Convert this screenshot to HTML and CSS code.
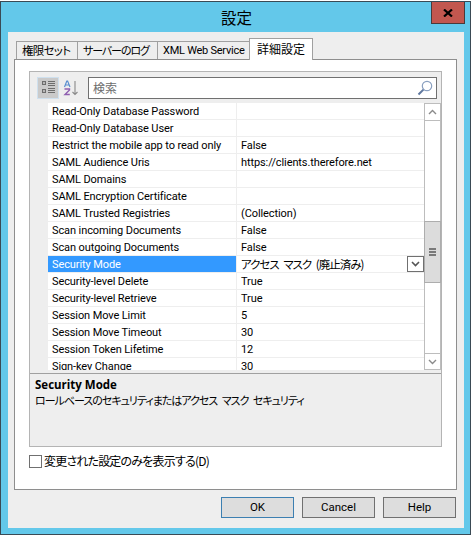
FILE: index.html
```html
<!DOCTYPE html>
<html lang="ja">
<head>
<meta charset="utf-8">
<title>設定</title>
<link rel="stylesheet" href="styles.css">
</head>
<body>
<div class="window">
  <div class="titlebar">
    <span class="title">設定</span>
    <button class="close"><svg width="10" height="8" viewBox="0 0 10 8"><path d="M1 0.5 L9 7.5 M9 0.5 L1 7.5" stroke="#000" stroke-width="2.2" fill="none"/></svg></button>
  </div>
  <div class="client">
    <div class="tabs">
      <div class="tab tab-perm">権限セット</div>
      <div class="tab tab-log">サーバーのログ</div>
      <div class="tab tab-xml">XML Web Service</div>
      <div class="tab active">詳細設定</div>
    </div>
    <div class="panel">
      <div class="grid">
        <div class="toolbar">
          <div class="tool on">
            <svg width="15" height="15" viewBox="0 0 15 15"><g fill="#6d6d6d"><rect x="1" y="1" width="4" height="4"/><rect x="1" y="9" width="4" height="4"/><rect x="7" y="1" width="7" height="1"/><rect x="7" y="3" width="7" height="1"/><rect x="7" y="5" width="7" height="1"/><rect x="7" y="8" width="7" height="1"/><rect x="7" y="10" width="7" height="1"/><rect x="7" y="12" width="7" height="1"/></g><g fill="#fff"><rect x="2" y="2.5" width="2" height="1"/><rect x="2" y="10.5" width="2" height="1"/></g></svg>
          </div>
          <div class="tool">
            <svg width="16" height="16" viewBox="0 0 16 16"><path d="M1.5 7 L3.8 1 L4.6 1 L7 7 M2.4 5 H6" stroke="#5a8fd0" stroke-width="1.2" fill="none"/><path d="M1.5 9 H6.5 V10 L2 14.5 H6.8" stroke="#8f5fb0" stroke-width="1.4" fill="none"/><path d="M12 1 V14.5 M9.5 12 L12 14.5 L14.5 12" stroke="#8a8a8a" stroke-width="1.1" fill="none"/></svg>
          </div>
          <div class="search">
            <span class="placeholder">検索</span>
            <svg width="16" height="16" viewBox="0 0 16 16"><circle cx="10" cy="6" r="4.7" stroke="#8aa0c0" stroke-width="1.2" fill="none"/><path d="M6.4 9.6 L1.5 14.5" stroke="#5f789f" stroke-width="2" fill="none"/></svg>
          </div>
        </div>
        <div class="body">
          <div class="gutter"></div>
          <div class="rows">
            <div class="row"><div class="name">Read-Only Database Password</div><div class="value"></div></div>
            <div class="row"><div class="name">Read-Only Database User</div><div class="value"></div></div>
            <div class="row"><div class="name">Restrict the mobile app to read only</div><div class="value">False</div></div>
            <div class="row"><div class="name">SAML Audience Uris</div><div class="value">https://clients.therefore.net</div></div>
            <div class="row"><div class="name">SAML Domains</div><div class="value"></div></div>
            <div class="row"><div class="name">SAML Encryption Certificate</div><div class="value"></div></div>
            <div class="row"><div class="name">SAML Trusted Registries</div><div class="value">(Collection)</div></div>
            <div class="row"><div class="name">Scan incoming Documents</div><div class="value">False</div></div>
            <div class="row"><div class="name">Scan outgoing Documents</div><div class="value">False</div></div>
            <div class="row selected"><div class="name">Security Mode</div><div class="value">アクセス マスク (廃止済み)<span class="drop"><svg width="9" height="6" viewBox="0 0 9 6"><path d="M1 1 L4.5 4.5 L8 1" stroke="#555" stroke-width="1.6" fill="none"/></svg></span></div></div>
            <div class="row"><div class="name">Security-level Delete</div><div class="value">True</div></div>
            <div class="row"><div class="name">Security-level Retrieve</div><div class="value">True</div></div>
            <div class="row"><div class="name">Session Move Limit</div><div class="value">5</div></div>
            <div class="row"><div class="name">Session Move Timeout</div><div class="value">30</div></div>
            <div class="row"><div class="name">Session Token Lifetime</div><div class="value">12</div></div>
            <div class="row"><div class="name">Sign-key Change</div><div class="value">30</div></div>
          </div>
          <div class="scrollbar">
            <div class="sbtn"><svg width="9" height="6" viewBox="0 0 9 6"><path d="M1 5 L4.5 1.5 L8 5" stroke="#8a8a8a" stroke-width="1.4" fill="none"/></svg></div>
            <div class="track upper"></div>
            <div class="thumb"><span></span><span></span><span></span></div>
            <div class="track lower"></div>
            <div class="sbtn down"><svg width="9" height="6" viewBox="0 0 9 6"><path d="M1 1 L4.5 4.5 L8 1" stroke="#8a8a8a" stroke-width="1.4" fill="none"/></svg></div>
          </div>
        </div>
        <div class="desc">
          <div class="desc-title">Security Mode</div>
          <div class="desc-text">ロールベースのセキュリティまたはアクセス マスク セキュリティ</div>
        </div>
      </div>
      <label class="check"><span class="box"></span><span>変更された設定のみを表示する(D)</span></label>
    </div>
    <div class="buttons">
      <button class="btn default">OK</button>
      <button class="btn">Cancel</button>
      <button class="btn">Help</button>
    </div>
  </div>
</div>
</body>
</html>
```
FILE: styles.css
```css
* { box-sizing: border-box; }
html, body { margin: 0; padding: 0; background: #fff; }
body {
  width: 473px;
  height: 537px;
  overflow: hidden;
  font-family: "Roboto", "Noto Sans CJK JP", sans-serif;
  font-size: 11px;
  letter-spacing: -0.1px;
  color: #000;
}
.window {
  margin-top: 1px;
  width: 471px;
  height: 534px;
  background: #63c8ea;
  border: 1px solid #3a4a55;
  display: flex;
  flex-direction: column;
  padding: 0 6px 6px 7px;
}
.titlebar {
  height: 30px;
  flex: none;
  display: flex;
  align-items: center;
  justify-content: center;
  position: relative;
}
.title {
  font-family: "Noto Sans CJK JP", sans-serif;
  font-size: 15.5px;
  letter-spacing: 0;
  color: #000;
  margin-left: 1px;
}
.close {
  position: absolute;
  right: -1px;
  top: 0;
  width: 34px;
  height: 22px;
  border: 1px solid #4a3a3a;
  border-top: 0;
  background: #c2574f;
  padding: 0;
  display: flex;
  align-items: center;
  justify-content: center;
}
.client {
  flex: 1;
  background: #eeeeee;
  padding: 7px 7px 8px 6px;
  display: flex;
  flex-direction: column;
}
.tabs {
  display: flex;
  height: 20px;
  padding-left: 2px;
  align-items: flex-end;
  position: relative;
  z-index: 1;
  flex: none;
}
.tab {
  height: 18px;
  border: 1px solid #a0a0a0;
  border-bottom: 0;
  margin-right: -1px;
  font-family: "Noto Sans CJK JP", sans-serif;
  font-size: 12px;
  font-feature-settings: "palt";
  line-height: 17px;
  padding: 0 5px;
  background: #eeeeee;
  white-space: nowrap;
}
.tab-perm { width: 62px; font-size: 11.5px; letter-spacing: -0.7px; }
.tab-log { width: 81px; font-size: 11px; letter-spacing: -1.1px; }
.tab-xml { width: 93px; font-family: "Roboto", sans-serif; font-size: 11px; letter-spacing: -0.25px; }
.tab.active {
  width: 64px;
  height: 22px;
  background: #fff;
  margin-bottom: -1px;
  line-height: 20px;
  padding-left: 7px;
  letter-spacing: 0;
  position: relative;
}
.panel {
  height: 431px;
  flex: none;
  border: 1px solid #8e8e8e;
  background: #fff;
  padding: 11px 14px 0 14px;
}
.grid {
  width: 413px;
  height: 376px;
  border: 1px solid #b4b4b4;
  background: #eeeeee;
  display: flex;
  flex-direction: column;
}
.toolbar {
  height: 31px;
  flex: none;
  display: flex;
  align-items: center;
  padding: 0 4px 0 7px;
  gap: 1px;
}
.tool {
  width: 22px;
  height: 22px;
  display: flex;
  align-items: center;
  justify-content: center;
}
.tool.on { background: #cacaca; border: 1px solid #cfe0ee; }
.search {
  flex: 1;
  height: 22px;
  margin-left: 5px;
  border: 1px solid #707070;
  background: #fff;
  display: flex;
  align-items: center;
  justify-content: space-between;
  padding: 0 3px 0 4px;
}
.placeholder {
  font-family: "Noto Sans CJK JP", sans-serif;
  font-size: 12px;
  color: #6d6d6d;
}
.body {
  height: 267px;
  flex: none;
  display: flex;
  background: #eeeeee;
  overflow: hidden;
}
.gutter { width: 18px; flex: none; }
.rows { width: 376px; flex: none; background: #fff; overflow: hidden; }
.row {
  height: 17px;
  display: flex;
  border-bottom: 1px solid #eeeeee;
  line-height: 18px;
  white-space: nowrap;
}
.name {
  width: 189px;
  padding-left: 4px;
  flex: none;
  border-right: 1px solid #eeeeee;
  overflow: hidden;
}
.value {
  flex: 1;
  padding-left: 4px;
  position: relative;
  overflow: hidden;
}
.selected .name { background: #3399ff; color: #fff; }
.selected .value {
  font-family: "Noto Sans CJK JP", sans-serif;
  font-size: 11.5px;
  font-feature-settings: "palt";
  letter-spacing: -1px;
  word-spacing: 3px;
  line-height: 16px;
}
.drop {
  position: absolute;
  right: 0;
  top: 0;
  width: 17px;
  height: 16px;
  border: 1px solid #707070;
  background: #fff;
  display: flex;
  align-items: center;
  justify-content: center;
}
.scrollbar {
  width: 17px;
  flex: none;
  display: flex;
  flex-direction: column;
  background: #fff;
  border: 1px solid #bdbdbd;
  border-bottom-width: 1px;
}
.sbtn {
  height: 16px;
  flex: none;
  display: flex;
  align-items: center;
  justify-content: center;
}
.sbtn.down { border-top: 1px solid #bdbdbd; }
.track.upper { height: 101px; flex: none; border-top: 1px solid #bdbdbd; }
.track.lower { flex: 1; }
.thumb {
  height: 62px;
  flex: none;
  background: #dcdcdc;
  margin: 0 -1px;
  border: 1px solid #adadad;
  display: flex;
  flex-direction: column;
  align-items: center;
  justify-content: center;
  gap: 1px;
}
.thumb span { width: 7px; height: 2px; background: #7a7a7a; }
.desc {
  flex: 1;
  margin-top: 3px;
  border-top: 1px solid #a0a0a0;
  padding: 3px 5px;
}
.desc-title {
  font-family: "Open Sans", sans-serif;
  font-size: 11.5px;
  letter-spacing: 0;
  font-weight: 700;
  line-height: 15px;
}
.desc-text {
  font-family: "Noto Sans CJK JP", sans-serif;
  font-size: 11px;
  letter-spacing: -1px;
  word-spacing: 3px;
  font-feature-settings: "palt";
  line-height: 16px;
  white-space: nowrap;
}
.check {
  display: flex;
  align-items: center;
  gap: 2px;
  margin-top: 6px;
  font-family: "Noto Sans CJK JP", sans-serif;
  font-size: 12px;
  letter-spacing: -0.8px;
  font-feature-settings: "palt";
  line-height: 16px;
}
.box {
  width: 13px;
  height: 13px;
  border: 1px solid #707070;
  background: #fff;
}
.buttons {
  display: flex;
  justify-content: flex-end;
  gap: 8px;
  padding-top: 7px;
  padding-right: 1px;
}
.btn {
  width: 73px;
  height: 21px;
  border: 1px solid #707070;
  background: #dddddd;
  font-family: "Roboto", sans-serif;
  font-size: 11.5px;
  color: #000;
  padding: 0;
  line-height: 17px;
}
.btn.default { border-color: #3c7fb1; }
```
